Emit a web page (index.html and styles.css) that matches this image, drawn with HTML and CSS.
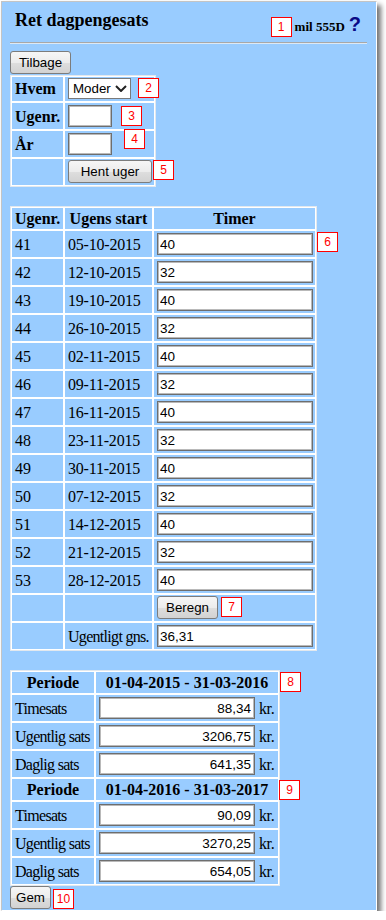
FILE: index.html
```html
<!DOCTYPE html>
<html lang="da">
<head>
<meta charset="utf-8">
<title>Ret dagpengesats</title>
<link rel="stylesheet" href="styles.css">
</head>
<body>
<div class="frame">
  <div class="header">
    <h1 class="title">Ret dagpengesats</h1>
    <div class="user">
      <span class="tag">1</span>
      <span class="uname">mil 555D</span>
      <span class="help">?</span>
    </div>
  </div>
  <hr class="rule">
  <button class="btn btn-back">Tilbage</button>

  <table class="grid t1">
    <colgroup><col class="t1c1"><col class="t1c2"></colgroup>
    <tr class="r-sel"><th class="lh">Hvem</th><td><span class="sel"><select class="select"><option>Moder</option></select><svg class="chev" width="12" height="7" viewBox="0 0 12 7"><path d="M1 1 L6 6 L11 1" fill="none" stroke="#222" stroke-width="2"/></svg></span></td></tr>
    <tr><th class="lh">Ugenr.</th><td><input class="inp small" type="text"></td></tr>
    <tr><th class="lh">År</th><td><input class="inp small" type="text"></td></tr>
    <tr class="r-btn"><td></td><td><button class="btn btn-hent">Hent uger</button></td></tr>
  </table>

  <table class="grid t2">
    <colgroup><col class="t2c1"><col class="t2c2"><col class="t2c3"></colgroup>
    <tr class="hrow"><th>Ugenr.</th><th>Ugens start</th><th>Timer</th></tr>
    <tr><td>41</td><td class="date">05-10-2015</td><td><input class="inp wide" type="text" value="40"></td></tr>
    <tr><td>42</td><td class="date">12-10-2015</td><td><input class="inp wide" type="text" value="32"></td></tr>
    <tr><td>43</td><td class="date">19-10-2015</td><td><input class="inp wide" type="text" value="40"></td></tr>
    <tr><td>44</td><td class="date">26-10-2015</td><td><input class="inp wide" type="text" value="32"></td></tr>
    <tr><td>45</td><td class="date">02-11-2015</td><td><input class="inp wide" type="text" value="40"></td></tr>
    <tr><td>46</td><td class="date">09-11-2015</td><td><input class="inp wide" type="text" value="32"></td></tr>
    <tr><td>47</td><td class="date">16-11-2015</td><td><input class="inp wide" type="text" value="40"></td></tr>
    <tr><td>48</td><td class="date">23-11-2015</td><td><input class="inp wide" type="text" value="32"></td></tr>
    <tr><td>49</td><td class="date">30-11-2015</td><td><input class="inp wide" type="text" value="40"></td></tr>
    <tr><td>50</td><td class="date">07-12-2015</td><td><input class="inp wide" type="text" value="32"></td></tr>
    <tr><td>51</td><td class="date">14-12-2015</td><td><input class="inp wide" type="text" value="40"></td></tr>
    <tr><td>52</td><td class="date">21-12-2015</td><td><input class="inp wide" type="text" value="32"></td></tr>
    <tr><td>53</td><td class="date">28-12-2015</td><td><input class="inp wide" type="text" value="40"></td></tr>
    <tr class="r-btn"><td></td><td></td><td><button class="btn btn-calc">Beregn</button></td></tr>
    <tr><td></td><td class="lbl">Ugentligt gns.</td><td><input class="inp wide" type="text" value="36,31"></td></tr>
  </table>

  <table class="grid t3">
    <colgroup><col class="t3c1"><col class="t3c2"></colgroup>
    <tr class="hrow"><th>Periode</th><th>01-04-2015 - 31-03-2016</th></tr>
    <tr><td class="lbl">Timesats</td><td><div class="amt"><input class="inp num" type="text" value="88,34"><span class="kr">kr.</span></div></td></tr>
    <tr><td class="lbl">Ugentlig sats</td><td><div class="amt"><input class="inp num" type="text" value="3206,75"><span class="kr">kr.</span></div></td></tr>
    <tr><td class="lbl">Daglig sats</td><td><div class="amt"><input class="inp num" type="text" value="641,35"><span class="kr">kr.</span></div></td></tr>
    <tr class="hrow"><th>Periode</th><th>01-04-2016 - 31-03-2017</th></tr>
    <tr><td class="lbl">Timesats</td><td><div class="amt"><input class="inp num" type="text" value="90,09"><span class="kr">kr.</span></div></td></tr>
    <tr><td class="lbl">Ugentlig sats</td><td><div class="amt"><input class="inp num" type="text" value="3270,25"><span class="kr">kr.</span></div></td></tr>
    <tr><td class="lbl">Daglig sats</td><td><div class="amt"><input class="inp num" type="text" value="654,05"><span class="kr">kr.</span></div></td></tr>
  </table>

  <button class="btn btn-gem">Gem</button>

  <span class="tag ann a2">2</span>
  <span class="tag ann a3">3</span>
  <span class="tag ann a4">4</span>
  <span class="tag ann a5">5</span>
  <span class="tag ann a6">6</span>
  <span class="tag ann a7">7</span>
  <span class="tag ann a8">8</span>
  <span class="tag ann a9">9</span>
  <span class="tag ann a10">10</span>
</div>
</body>
</html>
```
FILE: styles.css
```css
html, body {
  margin: 0;
  padding: 0;
  background: #ffffff;
}

.frame {
  position: relative;
  box-sizing: border-box;
  width: 376px;
  margin: 1px 0 0 1px;
  padding: 0 0 1px 0;
  background: #99ccff;
  border: 1px solid;
  border-color: #c4c4c4 #ffffff #ffffff #c4c4c4;
  box-shadow: 4px 4px 5px rgba(0, 0, 0, 0.55);
  font-family: "Liberation Serif", "Times New Roman", serif;
  color: #000;
}

.header {
  display: flex;
  justify-content: space-between;
  align-items: flex-start;
  height: 40px;
}

.title {
  margin: 8px 0 0 13px;
  font-size: 18px;
  line-height: 20px;
  font-weight: bold;
}

.user {
  display: flex;
  align-items: baseline;
  margin: 11px 15px 0 0;
}

.uname {
  margin-left: 3px;
  font-size: 13px;
  font-weight: bold;
}

.help {
  margin-left: 4px;
  font-family: "Liberation Sans", Arial, sans-serif;
  font-weight: bold;
  font-size: 20px;
  color: #0a0a86;
}

.tag {
  display: inline-block;
  box-sizing: border-box;
  width: 21px;
  height: 20px;
  border: 1px solid #ff0000;
  background: #ffffff;
  color: #ff0000;
  font-family: "Liberation Sans", Arial, sans-serif;
  font-size: 12px;
  line-height: 16px;
  padding-top: 1px;
  text-align: center;
}

.rule {
  margin: 0 9px 7px 8px;
  height: 0;
  border: 0;
  border-top: 1px solid #a8a8a8;
  border-bottom: 1px solid #dde9f5;
}

.btn {
  display: block;
  box-sizing: border-box;
  height: 23px;
  padding: 0;
  border: 1px solid #7c7c7c;
  border-radius: 3px;
  background: linear-gradient(#f6f6f6, #ececec 50%, #dedede 51%, #d2d2d2);
  font-family: "Liberation Sans", Arial, sans-serif;
  font-size: 13.33px;
  color: #000;
}

.btn-back { width: 61px; margin: 0 0 1px 8px; }
.btn-hent { width: 84px; }
.btn-calc { width: 61px; }
.btn-gem { width: 41px; margin-left: 8px; }

.grid {
  border-collapse: separate;
  border-spacing: 0;
  border: 1px solid #e2e8ee;
  table-layout: fixed;
  margin-left: 8px;
}

.grid td,
.grid th {
  border: 1px solid #ffffff;
  padding: 2px 3px;
  font-size: 16px;
  line-height: 19px;
  text-align: left;
  vertical-align: middle;
  white-space: nowrap;
  overflow: visible;
}

.grid th { font-weight: bold; }

.grid .hrow th {
  padding: 1px 3px;
  text-align: center;
}

.grid .r-sel td,
.grid .r-sel th { padding: 1px 3px 2px; }

.grid .r-btn td { padding: 1px 3px 2px; }

.t1 { width: 146px; }
.t1c1 { width: 53px; }
.t1c2 { width: 91px; }

.t2 { width: 307px; margin-top: 19px; }
.t2c1 { width: 53px; }
.t2c2 { width: 89px; }
.t2c3 { width: 163px; }

.t3 { width: 270px; margin-top: 19px; }
.t3c1 { width: 84px; }
.t3c2 { width: 184px; }

.lbl { letter-spacing: -0.7px; }
.date { letter-spacing: -0.2px; }

.inp {
  display: block;
  box-sizing: border-box;
  height: 22px;
  margin: 0;
  padding: 0 2px;
  border: 1px solid #6e6e6e;
  box-shadow: inset 0 0 0 1px #b9b9b9;
  background: #fff;
  font-family: "Liberation Sans", Arial, sans-serif;
  font-size: 13.5px;
  color: #000;
  outline: none;
}

.small { width: 44px; }
.wide { width: 156px; }
.num { width: 156px; text-align: right; padding-right: 3px; }

.amt {
  display: flex;
  align-items: center;
  gap: 4px;
}

.kr { letter-spacing: -0.4px; }

.sel {
  position: relative;
  display: block;
  width: 63px;
  height: 21px;
}

.select {
  appearance: none;
  -webkit-appearance: none;
  display: block;
  box-sizing: border-box;
  width: 63px;
  height: 21px;
  margin: 0;
  padding: 0 0 0 4px;
  border: 1px solid #7a7a7a;
  border-radius: 0;
  background: #fff;
  font-family: "Liberation Sans", Arial, sans-serif;
  font-size: 13.33px;
  color: #000;
}

.chev {
  position: absolute;
  left: 47px;
  top: 7px;
}

.ann { position: absolute; }
.a2 { left: 136px; top: 76px; }
.a3 { left: 119px; top: 104px; }
.a4 { left: 122px; top: 127px; }
.a5 { left: 151px; top: 158px; }
.a6 { left: 315px; top: 230px; }
.a7 { left: 219px; top: 595px; }
.a8 { left: 278px; top: 670px; }
.a9 { left: 277px; top: 778px; }
.a10 { left: 51px; top: 887px; }
```
